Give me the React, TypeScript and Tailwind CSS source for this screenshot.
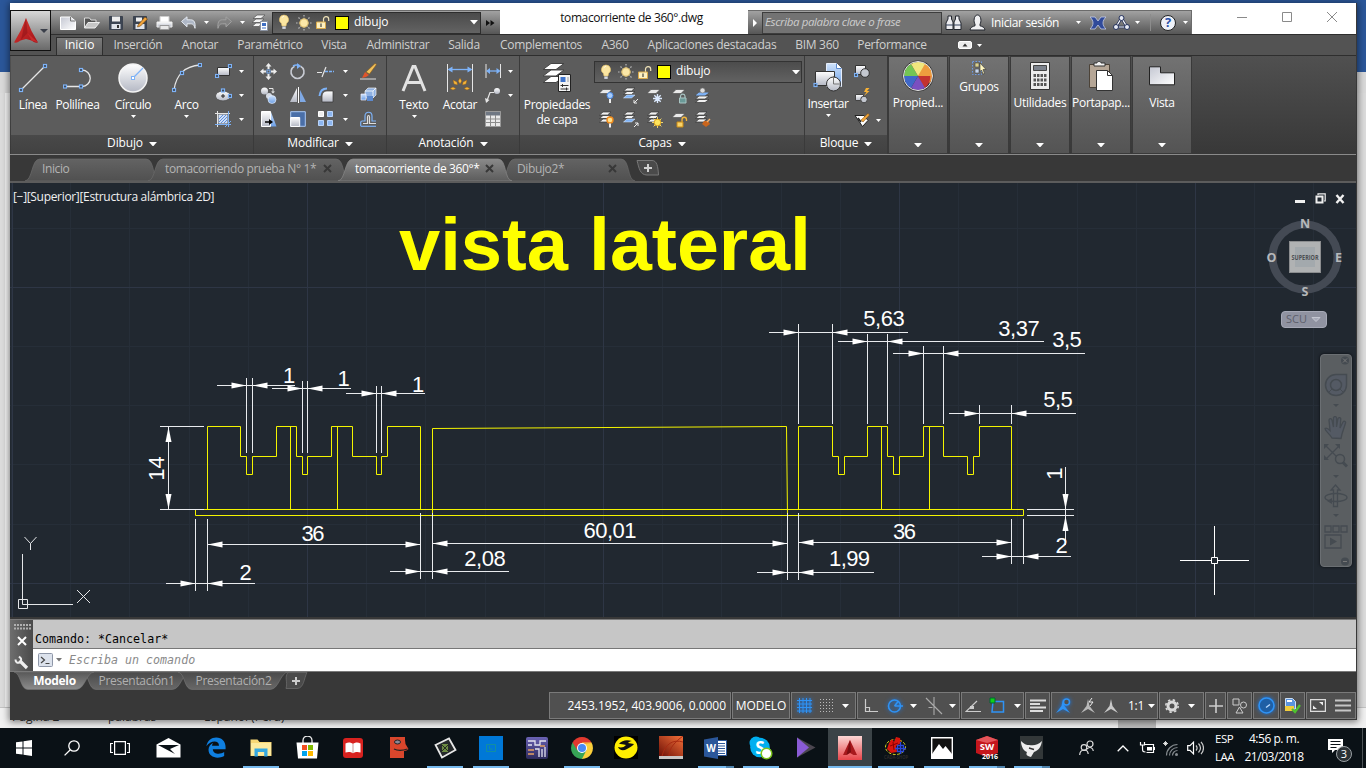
import React from "react";

type P = { children?: React.ReactNode; w?: number; h?: number; vb?: string; c?: string };

function S({ children, w = 16, h = 16, vb, c = "" }: P) {
  return (
    <svg width={w} height={h} viewBox={vb ?? `0 0 ${w} ${h}`} fill="none" className={"shrink-0 " + c}>
      {children}
    </svg>
  );
}

const B = "#7db2f7";
const W = "#e6e6e6";

function Dn({ w = 6, c = "" }: { w?: number; c?: string }) {
  return (
    <S w={w} h={w / 2 + 0.5} vb="0 0 8 4.6" c={c}>
      <path d="M0 0h8L4 4.6z" fill="#fff" />
    </S>
  );
}

function Node({ x, y }: { x: number; y: number }) {
  return <rect x={x - 1.5} y={y - 1.5} width="3" height="3" fill="#37404d" stroke={B} strokeWidth="1.2" />;
}

function Defs() {
  return (
    <svg width="0" height="0" className="absolute">
      <defs>
        <linearGradient id="lt" x1="0" y1="0" x2="0" y2="1"><stop stopColor="#fff" /><stop offset="1" stopColor="#b4b8c4" /></linearGradient>
        <linearGradient id="pg" x1="0" y1="0" x2="1" y2="1"><stop stopColor="#c4c7d2" /><stop offset="1" stopColor="#fff" /></linearGradient>
        <linearGradient id="bl" x1="0" y1="0" x2="0" y2="1"><stop stopColor="#cfe2fb" /><stop offset="1" stopColor="#6c9fe6" /></linearGradient>
        <linearGradient id="tab" x1="0" y1="0" x2="0" y2="1"><stop stopColor="#636363" /><stop offset="1" stopColor="#505050" /></linearGradient>
        <linearGradient id="tabOn" x1="0" y1="0" x2="0" y2="1"><stop stopColor="#8a8a8a" /><stop offset="1" stopColor="#5c5c5c" /></linearGradient>
        <linearGradient id="lay" x1="0" y1="0" x2="0" y2="1"><stop stopColor="#4a4a4a" /><stop offset="1" stopColor="#686868" /></linearGradient>
        <linearGradient id="layOn" x1="0" y1="0" x2="0" y2="1"><stop stopColor="#585858" /><stop offset="1" stopColor="#8c8c8c" /></linearGradient>
        <linearGradient id="red" x1="0" y1="0" x2="1" y2="1"><stop stopColor="#e23a33" /><stop offset="1" stopColor="#a01218" /></linearGradient>
        <linearGradient id="org" x1="0" y1="1" x2="1" y2="0"><stop stopColor="#6d1006" /><stop offset="1" stopColor="#f4713a" /></linearGradient>
        <linearGradient id="pur" x1="0" y1="0" x2="0" y2="1"><stop stopColor="#6a62b4" /><stop offset="1" stopColor="#2c2a5c" /></linearGradient>
        <linearGradient id="acd" x1="0" y1="0" x2="0" y2="1"><stop stopColor="#fbd7d5" /><stop offset="1" stopColor="#e8454a" /></linearGradient>
      </defs>
    </svg>
  );
}

/* ---------- layer state glyphs ---------- */
const Bulb = () => (
  <S w={12} h={17}>
    <path d="M6 1a4.6 4.6 0 0 0-2.6 8.4L4 12h4l.6-2.6A4.6 4.6 0 0 0 6 1z" fill="#fbe6a2" stroke="#e2bf67" strokeWidth=".6" />
    <path d="M4.3 3.5c.4-1 1-1.300 1.800-1.200" stroke="#fff" />
    <path d="M4.300 12.500h3.400v2.400H4.300z" fill="#d5d9e2" />
  </S>
);
const Sun = () => (
  <S w={16} h={16}>
    <path d="M8 0v16M0 8h16M2.500 2.500l11 11M13.500 2.500l-11 11" stroke="#b9b9b9" strokeWidth="1.200" strokeDasharray="1.600 1.200" />
    <circle cx="8" cy="8" r="4.200" fill="#fbe7a8" stroke="#d8b763" />
  </S>
);
const Lock = () => (
  <S w={15} h={15}>
    <path d="M8.500 7V4.200a2.600 2.600 0 0 1 5.200 0V6" stroke="#f0e3b8" strokeWidth="1.200" />
    <path d="M1.500 7h9v6.500h-9z" fill="#fdf0c0" stroke="#d9a94a" />
    <path d="M6 8.500v3.500" stroke="#222" />
  </S>
);
const LayerState = () => (
  <>
    <span className="flex w-[22px] justify-center"><Bulb /></span>
    <span className="flex w-[17px] justify-center"><Sun /></span>
    <span className="flex w-[20px] justify-center"><Lock /></span>
    <span className="mr-[5px] ml-[3px] h-[14px] w-[14px] border border-black bg-[#ffff00]" />
    <span className="pb-[2px] text-[12px] tracking-[-0.150px] text-white">dibujo</span>
  </>
);

/* ---------- title bar ---------- */
const quick: [string, React.ReactNode][] = [
  ["w-[24px]", <S w={18} h={16}><path d="M1.500 2h10l5 4v8.500h-15z" fill="url(#pg)" stroke="#fff" /><path d="M11.500 2v4h5" stroke="#777" /></S>],
  ["w-[24px]", <S w={18} h={16}><path d="M1.500 13V3h5l1.500 2h5v3" fill="#555" stroke="#ddd" /><path d="M1.500 13 5 7.500h11.500L12 13z" fill="#c6c6c6" stroke="#eee" /></S>],
  ["w-[24px]", <S><path d="M1.500 1.500h13v13h-13z" fill="#3c4553" stroke="#3b424e" /><path d="M4 1.500h8v5H4z" fill="#eee" /><path d="M3.500 9h9v5h-9z" fill="#dfe3ea" /><path d="M9 10h2v3H9z" fill="#333" /></S>],
  ["w-[24px]", <S><path d="M1.500 1.500h13v13h-13z" fill="#3c4553" stroke="#3b424e" /><path d="M4 2.500h6v4H4z" fill="#eee" /><path d="M3.500 9h9v5h-9z" fill="#dfe3ea" /><path d="m6 10 7-8 2.500 2L8.500 11 5.500 12z" fill="#f1a33b" stroke="#71440f" strokeWidth=".6" /></S>],
  ["w-[24px]", <S w={17}><path d="M4 7V1.500h9V7" fill="#fff" stroke="#ccc" /><path d="M1 7h15v5H1z" fill="url(#lt)" stroke="#eee" /><path d="M4 10.500h9v4H4z" fill="#e8e8e8" stroke="#999" /></S>],
  ["w-[24px]", <S w={17}><path d="M1.500 6.500 7 1.800v3h3.500c4 0 5 3 4.500 8.500-1-3.500-2-4.500-4.500-4.500H7v3z" fill="#aeb7c6" stroke="#e4e9f0" /></S>],
  ["w-[12px]", <Dn w={5} />],
  ["w-[24px]", <S w={17}><path d="M15.500 6.500 10 1.800v3H6.500c-4 0-5 3-4.500 8.500 1-3.500 2-4.500 4.500-4.500H10v3z" fill="#828282" stroke="#a2a2a2" /></S>],
  ["w-[12px]", <Dn w={5} />],
];

const Sheets = () => (
  <S w={18} h={17}>
    <path d="M6 1h8l-4 3.500H2zM5 5h8l-4 3.500H1zM5 9h6l-3 3.500H1z" fill="#f2f2f2" stroke="#555" strokeWidth=".7" />
    <path d="M9.500 7.500h7v9h-7z" fill="#fff" stroke="#8a93a2" /><path d="M11 9h4v3h-4z" fill="#3f6fc4" /><path d="M11 14h4" stroke="#3f6fc4" />
  </S>
);

function TitleBar() {
  return (
    <div className="flex h-[31px] items-end bg-white pr-[1px]">
      <div className="flex h-[24px] w-[449px] shrink-0 items-center border-t border-[#6b6b6b] bg-gradient-to-b from-[#a2a2a2] to-[#565656] pl-[5px]">
        {quick.map(([w, n], i) => (
          <span key={i} className={"flex shrink-0 items-center justify-center " + w}>{n}</span>
        ))}
        <span className="flex w-[24px] justify-center"><Sheets /></span>
        <div className="flex h-[22px] w-[209px] items-center border border-[#2d2d2d] bg-gradient-to-b from-[#4b4b4b] to-[#636363]">
          <LayerState />
          <Dn w={8} c="mr-[2px] ml-auto" />
        </div>
        <S w={9} h={8} c="ml-[5px]"><path d="M0 1v6l4-3zM4.500 1v6l4-3z" fill="#111" /></S>
      </div>
      <div className="flex h-[31px] w-[248px] shrink-0 items-center justify-center pb-[2px] pl-[15px] text-[12px] tracking-[-0.400px] text-[#111]">tomacorriente de 360°.dwg</div>
      <div className="flex h-[24px] w-[444px] shrink-0 items-center border-t border-r border-[#6b6b6b] bg-gradient-to-b from-[#a2a2a2] to-[#565656]">
        <S w={14} h={8}><path d="M5 0v8l4-4z" fill="#fff" /></S>
        <div className="flex h-[22px] w-[180px] items-center border border-[#3d3d3d] bg-[#737373] pb-[2px] pl-[2px] text-[11.500px] tracking-[-0.380px] whitespace-nowrap text-[#cdcdcd] italic">Escriba palabra clave o frase</div>
        <S w={17} h={17} c="ml-[3px]">
          <path d="M3 2h3.500v3L8 8v7.500H1V9l2-4zM10.500 2H14v3l2 4v6.500H9V8l1.500-3z" fill="#ececf0" stroke="#23272f" /><path d="M1 11h7M9 11h7" stroke="#33405a" />
        </S>
        <S w={17} h={17} c="ml-[7px]">
          <path d="M1 16c.3-3 3-3.500 5-4.200V10C4.500 8.500 4.500 1 8.500 1s4 7.500 2.500 9v1.800c2 .7 4.700 1.200 5 4.200z" fill="#f0f0f2" stroke="#23272f" />
        </S>
        <span className="ml-[5px] w-[85px] text-[12px] tracking-[-0.350px] whitespace-nowrap text-white">Iniciar sesión</span>
        <Dn w={5} />
        <S w={16} h={14} c="ml-[9px]">
          <path d="M0 1h5l3 4 3-4h5c-4 4-4 8 0 12h-5L8 9l-3 4H0c4-4 4-8 0-12z" fill="#304a9a" stroke="#c6cde4" strokeWidth=".8" />
        </S>
        <S w={17} h={16} c="ml-[7px]">
          <path d="M8.500 3 3 12h11z" stroke="#23305c" strokeWidth="2.600" /><path d="M8.500 3 3 12h11z" stroke="#fff" strokeWidth="1.200" />
          <circle cx="8.500" cy="3" r="2.500" fill="#e8ebf5" stroke="#23305c" /><circle cx="3" cy="12" r="2.500" fill="#e8ebf5" stroke="#23305c" /><circle cx="14" cy="12" r="2.500" fill="#e8ebf5" stroke="#23305c" />
        </S>
        <Dn w={5} c="ml-[5px]" />
        <span className="ml-[10px] h-[17px] w-px bg-[#8c8c8c]" />
        <span className="ml-[9px] flex h-[16px] w-[16px] items-center justify-center rounded-full border border-[#222] bg-[#eef1f8] text-[13px] font-bold text-[#2a50a8]">?</span>
        <Dn w={5} c="ml-[7px]" />
      </div>
      <div className="flex h-[31px] flex-1 justify-end pb-[4px]">
        <span className="flex w-[45px] items-center justify-center"><S w={10} h={10}><path d="M0 5.500h10" stroke="#8a8a8a" /></S></span>
        <span className="flex w-[45px] items-center justify-center"><S w={10} h={10}><path d="M.5.500h9v9h-9z" stroke="#8a8a8a" /></S></span>
        <span className="flex w-[46px] items-center justify-center"><S w={10} h={10}><path d="m0 0 10 10M10 0 0 10" stroke="#8a8a8a" /></S></span>
      </div>
    </div>
  );
}

const ribbonTabs: [string, string][] = [
  ["Inserción", "w-[70px]"], ["Anotar", "w-[54px]"], ["Paramétrico", "w-[86px]"], ["Vista", "w-[42px]"],
  ["Administrar", "w-[86px]"], ["Salida", "w-[46px]"], ["Complementos", "w-[108px]"], ["A360", "w-[40px]"],
  ["Aplicaciones destacadas", "w-[154px]"], ["BIM 360", "w-[56px]"], ["Performance", "w-[94px]"],
];

function RibbonTabs() {
  return (
    <div className="flex h-[21px] border-t border-[#2e2e2e] bg-[#535353] pt-[2px] pl-[5px]">
      <span className="flex h-[18px] w-[47px] shrink-0 items-center justify-center border border-b-0 border-[#2e2e2e] bg-gradient-to-b from-[#7b7b7b] to-[#606060] pb-[3px] text-[12px] text-white">Inicio</span>
      {ribbonTabs.map(([t, w]) => (
        <span key={t} className={"flex h-[15px] shrink-0 items-center justify-center text-[12px] tracking-[-0.280px] whitespace-nowrap text-[#d0d0d0] " + w}>{t}</span>
      ))}
      <S w={14} h={8} c="mt-[4px] ml-[19px]"><rect x=".5" y=".5" width="13" height="7" rx="1.500" fill="#ececec" stroke="#fff" /><path d="M4.500 5.500h5L7 2.500z" fill="#333" /></S>
      <Dn w={5} c="mt-[7px] ml-[5px]" />
    </div>
  );
}

/* ---------- ribbon ---------- */
function Panel({ title, w, children }: { title: string; w: string; children: React.ReactNode }) {
  return (
    <div className={"flex shrink-0 flex-col border-r border-[#3a3a3a] " + w}>
      <div className="flex h-[79px] bg-[#5c5c5c]">{children}</div>
      <div className="flex h-[19px] items-center justify-center gap-[6px] bg-gradient-to-b from-[#494949] to-[#414141] pb-[3px] text-[12px] tracking-[-0.150px] text-white">{title}<Dn w={8} c="mt-[2px]" /></div>
    </div>
  );
}
function Big({ w, icon, label, arrow, top = "pt-[6px]" }: { w: string; icon: React.ReactNode; label: string[]; arrow?: boolean; top?: string }) {
  return (
    <div className={`flex shrink-0 flex-col items-center ${w} ${top}`}>
      <div className="flex h-[32px] items-center">{icon}</div>
      <div className="mt-[3px] flex flex-col items-center">
        {label.map((l) => <span key={l} className="h-[15px] text-[12px] leading-[15px] tracking-[-0.350px] whitespace-nowrap text-white">{l}</span>)}
      </div>
      {arrow && <Dn w={5} c="mt-[3px]" />}
    </div>
  );
}
function Row({ items }: { items: [string, React.ReactNode][] }) {
  return (
    <div className="flex h-[24px] items-center">
      {items.map(([w, n], i) => <span key={i} className={"flex shrink-0 items-center justify-center " + w}>{n}</span>)}
    </div>
  );
}

const stack = "M5 1h8l-3.500 3H1.500zM5 4.500h8l-3.500 3H1.500zM5 8h8l-3.500 3H1.500z";
function Layer({ blue, one, children }: { blue?: boolean; one?: boolean; children?: React.ReactNode }) {
  return (
    <S w={17} h={17}>
      {one ? <path d="M5 2.500h9l-4 4H1z" fill="#e9e9e9" stroke="#444" strokeWidth=".6" /> : <path d={stack} fill="#f1f1f1" stroke="#333" strokeWidth=".7" />}
      {blue && <path d="M5 8h8l-3.500 3H1.500z" fill={B} stroke="#dce9fb" strokeWidth=".6" />}
      {children}
    </S>
  );
}

function Ribbon() {
  const a: [string, React.ReactNode] = ["w-[12px]", <Dn w={5} />];
  return (
    <div className="flex h-[99px] border-t border-[#2e2e2e] bg-gradient-to-b from-[#505050] to-[#383838] pl-[1px]">
      <Panel title="Dibujo" w="w-[243px]">
        <Big w="w-[44px]" label={["Línea"]} icon={<S w={30} h={30}><path d="M3 27 27 3" stroke={W} strokeWidth="1.300" /><Node x={3} y={27} /><Node x={27} y={3} /></S>} />
        <Big w="w-[45px]" label={["Polilínea"]} icon={<S w={30} h={30}><path d="M2 23.500h17a8 8 0 0 0 0-16.500" stroke={W} strokeWidth="1.300" /><Node x={2} y={23.500} /><Node x={18} y={23.500} /><Node x={18} y={7} /></S>} />
        <Big w="w-[66px]" arrow label={["Círculo"]} icon={<S w={30} h={30}><circle cx="15" cy="15" r="14" fill="url(#lt)" stroke="#f4f4f4" strokeWidth="1.500" /><path d="m15 15 10-10" stroke={B} strokeWidth="1.300" /><rect x="13.500" y="13.500" width="3" height="3" fill="#fff" stroke={B} /></S>} />
        <Big w="w-[41px]" arrow label={["Arco"]} icon={<S w={30} h={30}><path d="M2 27C4 11 14 3 28 2" stroke={W} strokeWidth="1.300" /><Node x={2} y={27} /><Node x={10} y={10} /><Node x={28} y={2} /></S>} />
        <div className="flex flex-col pt-[3px] pl-[4px]">
          <Row items={[["w-[24px]", <S w={17} h={14}><path d="M2.500 3.500h12v8h-12z" fill="url(#lt)" stroke="#333" /><Node x={2} y={12} /><Node x={15} y={2} /></S>], a]} />
          <Row items={[["w-[24px]", <S w={17} h={14}><ellipse cx="8" cy="8" rx="7.500" ry="5" fill="url(#lt)" stroke="#555" /><path d="M6 8h4M8 6v4" stroke="#222" /><Node x={8} y={2.500} /><Node x={15} y={8} /></S>], a]} />
          <Row items={[["w-[24px]", <S><path d="M3.500 3.500h9v9h-9z" fill="#cfdff7" /><path d="m4 8 4-4M4 11l7-7M6 12l6-6M9 12l3-3" stroke="#5d8edb" /><path d="M0 2.500h15M2.500 0v16" stroke={W} /><path d="M0 13.500h16M13.500 0v16M10 16l6-6" stroke={B} /></S>], a]} />
        </div>
      </Panel>
      <Panel title="Modificar" w="w-[133px]">
        <div className="flex flex-col pt-[3px]">
          <Row items={[
            ["w-[29px]", <S w={17} h={17}><path d="M8.500 0l3 3.500h-2V6h-2V3.500h-2zM8.500 17l3-3.500h-2V11h-2v2.500h-2zM0 8.500l3.500-3v2H6v2H3.500v2zM17 8.500l-3.500-3v2H11v2h2.500v2z" fill="#eee" /><rect x="7" y="7" width="3" height="3" stroke={B} /></S>],
            ["w-[29px]", <S w={17} h={17}><path d="M5.500 3.200a6.500 6.500 0 1 0 6 0" stroke="#c9ccd4" strokeWidth="1.600" /><path d="M4 3a8 8 0 0 1 6-.5" stroke={B} strokeWidth="1.500" /><path d="m8 0 4 3-4 3z" fill={B} /></S>],
            ["w-[27px]", <S w={17} h={17}><path d="M0 9.500h5M5 14 9 4" stroke={W} strokeWidth="1.200" /><path d="M8 8.500h9" stroke={B} strokeWidth="1.400" strokeDasharray="3 1" /></S>], a,
            ["w-[34px]", <S w={17} h={17}><path d="m6 9 9-8.500 1.500 1L9.500 11z" fill="#f2c15b" stroke="#8a5a14" strokeWidth=".6" /><path d="m5 9 4 3-3 2-4 1z" fill="#e0552b" /><path d="M0 16h16" stroke="#ddd" /></S>],
          ]} />
          <Row items={[
            ["w-[29px]", <S w={17} h={17}><circle cx="4.500" cy="4" r="3.500" fill="url(#lt)" /><circle cx="9" cy="9" r="3" fill="#d5dae4" /><circle cx="12" cy="12.500" r="4" fill="url(#bl)" stroke="#e3edfb" strokeWidth=".7" /><path d="M9 1.500h4V5" stroke={W} /><path d="m11 4.500 2 2 2-2z" fill={W} /></S>],
            ["w-[29px]", <S><path d="M7 1v14H0z" fill="url(#lt)" /><path d="M10 3v12h6z" fill="#7fa9e5" /><path d="M8.500 0v16" stroke="#fff" /></S>],
            ["w-[27px]", <S><path d="M4 15V9c0-3 2-5 5-5h6v11z" fill="url(#lt)" stroke="#333" strokeWidth=".7" /><path d="M1.500 9C2 4 4 1.500 9 1.500" stroke={B} strokeWidth="2" /></S>], a,
            ["w-[34px]", <S w={17}><path d="m5 4 3-3h8v7l-3 3H5z" fill="#8fb1e2" stroke="#eee" strokeWidth=".7" /><path d="M5 4h8v7M13 4l3-3" stroke="#fff" strokeWidth=".8" /><path d="M1 7h5v6H1z" fill="url(#bl)" stroke="#eef" strokeWidth=".7" /><path d="M7 9h6v5H7z" fill="#5c88cc" /></S>],
          ]} />
          <Row items={[
            ["w-[29px]", <S><path d="M.5.500h9v15h-9z" fill="url(#lt)" stroke="#fff" /><path d="m10 1 5.500 14.500H10z" fill="url(#bl)" /><path d="M4 11h5" stroke="#000" strokeWidth="1.500" /><path d="m8 8 4 3-4 3z" fill="#000" /></S>],
            ["w-[29px]", <S><path d="M.7.700h14.600v14.600H.7z" fill="#4a6fa8" stroke="#a9c9f5" /><path d="M.7 6.500h9v9h-9z" fill="url(#lt)" stroke="#fff" /></S>],
            ["w-[27px]", <S><path d="M.5.500h5v5h-5z" fill="#eee" stroke="#fff" /><path d="M9.500.500h5v5h-5zM.5 9.500h5v5h-5zM9.500 9.500h5v5h-5z" fill="#8cb5ef" stroke="#b9d4fa" /></S>], a,
            ["w-[34px]", <S w={17}><path d="M.7 15V11.500c0-1 .5-1.500 1.500-1.500H5V5c0-5 7-5 7 0v5h4" stroke={B} strokeWidth="1.200" /><path d="M16 15.300H.7" stroke={B} strokeWidth="1.200" /><path d="M3 12.500h4.500V6c0-2 2-2 2 0v6.500H16" stroke="#ddd" strokeWidth="1.200" /></S>],
          ]} />
        </div>
      </Panel>
      <Panel title="Anotación" w="w-[133px]">
        <Big w="w-[54px]" arrow label={["Texto"]} icon={<S w={26} h={28}><path d="M2 27 12 2.500h2L24 27M6 18.500h14" stroke="#e2e2e2" strokeWidth="3" /></S>} />
        <Big w="w-[38px]" label={["Acotar"]} icon={
          <S w={28} h={28}><path d="M1.500 0v28M26.500 0v28" stroke={W} /><path d="M3 5.500h22" stroke={B} strokeWidth="1.300" /><path d="m1.500 5.500 5-3v6zM26.500 5.500l-5-3v6z" fill={B} />
            <path d="m14 14 1.800 3-1.800 3-1.800-3zM7 16l4 2 .5 3-3.500-1zM21 16l-4 2-.5 3 3.500-1zM4 24.500l3-1.500 3 1.500-3 1.500zM24 24.500l-3-1.500-3 1.500 3 1.500z" fill="#f4b53a" stroke="#8d5410" strokeWidth=".4" /></S>} />
        <div className="flex flex-col pt-[3px]">
          <Row items={[["w-[28px]", <S><path d="M1 1v14M15.500 1v14" stroke={W} /><path d="M3 8h11" stroke={B} strokeWidth="1.300" /><path d="m1 8 4-3v6zM15.500 8l-4-3v6z" fill={B} /></S>], ["w-[6px]", <Dn w={5} />]]} />
          <Row items={[["w-[28px]", <S><path d="M1.500 15 5 5.500h4" stroke={W} strokeWidth="1.200" /><circle cx="12" cy="4" r="3" fill="url(#lt)" /><path d="m0 11 1 5 3.500-3z" fill={W} /></S>], ["w-[6px]", <Dn w={5} />]]} />
          <Row items={[["w-[28px]", <S><path d="M.5.500h15v15H.5z" fill="#e9e9e9" stroke="#999" /><path d="M1 1h14v3.500H1z" fill="#6f7783" /><path d="M1 8h14M1 11.500h14M5.500 4v11M10.500 4v11" stroke="#8b8b8b" /></S>]]} />
        </div>
      </Panel>
      <Panel title="Capas" w="w-[285px]">
        <Big w="w-[74px]" label={["Propiedades", "de capa"]} icon={
          <S w={30} h={32}><path d="M9 1.500h13l-8 6H1zM9 8h13l-8 6H1zM9 14.500h13l-8 6H1z" fill="#fff" stroke="#444" /><path d="M16.500 12.500h12v17h-12z" fill="#f4f4f4" stroke="#222" /><path d="M18.500 15h5v5h-5z" fill="#3f74cc" /><path d="M25 15h2v5h-2z" fill="#c9c9c9" /><path d="M18.500 23.500h8M18.500 27h8M20.500 22v3M24.500 25.500v3" stroke="#333" /></S>} />
        <div className="flex flex-col pt-[5px]">
          <div className="flex h-[22px] w-[208px] items-center border border-[#333] bg-gradient-to-b from-[#4c4c4c] to-[#626262]">
            <LayerState /><Dn w={8} c="mr-[1px] ml-auto" />
          </div>
          <Row items={[
            ["w-[24px]", <Layer one><circle cx="12" cy="8.500" r="3" fill="#a8cdfc" stroke="#4c8be6" /><path d="M12 12v4" stroke="#eee" strokeWidth="2" /></Layer>],
            ["w-[24px]", <Layer blue><path d="m16 12-4 4m0-3v3h3" stroke="#eee" /></Layer>],
            ["w-[25px]", <Layer one><path d="M11.500 7v9M7 11.500h9M8.300 8.300l6.400 6.400M14.700 8.300l-6.400 6.400" stroke="#dceaff" strokeWidth="1.400" /></Layer>],
            ["w-[25px]", <Layer one><path d="M9.500 11V9a2.300 2.300 0 0 1 4.500 0v2" stroke="#a9c5c4" strokeWidth="1.200" /><path d="M8.500 11h6.500v5H8.500z" fill="#6b9a98" stroke="#a9c5c4" /></Layer>],
            ["w-[21px]", <S w={17} h={17}><path d="M5 5.500h10l-4 3H1.500zM5 9h10l-4 3H1.500zM5 12.500h10l-4 3H1.500z" fill="#f1f1f1" stroke="#333" strokeWidth=".7" /><path d="M5 5.500h10l-4 3H1.500z" fill={B} /><circle cx="8.500" cy="3.500" r="2.500" fill="#ddd" stroke="#777" strokeWidth=".6" /></S>],
          ]} />
          <Row items={[
            ["w-[24px]", <Layer><circle cx="12" cy="9" r="3" fill="#ffe08a" stroke="#f08b1d" strokeWidth="1.400" /><path d="M12 12.500v4" stroke="#eee" strokeWidth="2" /></Layer>],
            ["w-[24px]", <Layer blue><path d="m12 16 4-4m-3 0h3v3" stroke="#eee" /></Layer>],
            ["w-[25px]", <Layer><circle cx="11.500" cy="11.500" r="3.300" fill="#ffe45c" stroke="#e2a81c" /><path d="M11.500 6v2M11.500 15v2M6 11.500h2M15 11.500h2M7.600 7.600l1.400 1.400M14 14l1.400 1.400M15.400 7.600 14 9M9 14l-1.400 1.400" stroke="#f0d56c" /></Layer>],
            ["w-[25px]", <Layer one><path d="M11 11V8.500a2.200 2.200 0 0 1 4.500 0V10" stroke="#f3b63c" strokeWidth="1.300" /><path d="M6 11h6v5H6z" fill="#f8d36a" stroke="#c98912" /></Layer>],
            ["w-[21px]", <Layer><path d="m10 10 4 0 2 3-4 3-4-3z" fill="#c9651d" /><path d="m13 11 3-3" stroke="#f0b070" strokeWidth="1.500" /></Layer>],
          ]} />
        </div>
      </Panel>
      <Panel title="Bloque" w="w-[83px]">
        <Big w="w-[46px]" arrow top="pt-[5px]" label={["Insertar"]} icon={
          <S w={31} h={30}><path d="M13.500 1.500h10l5 5v18h-15z" fill="url(#bl)" stroke="#e6eefb" /><path d="M23.500 1.500v5h5" fill="#fff" stroke="#5c88cc" /><path d="M2.500 9.500h19v14h-19z" fill="url(#lt)" stroke="#333" /><circle cx="20.500" cy="22" r="7" fill="url(#lt)" stroke="#333" /><path d="M20.500 14v8h7" stroke="#777" /><Node x={2.500} y={23} /></S>} />
        <div className="flex flex-col pt-[4px]">
          <Row items={[["w-[21px]", <S><path d="M1.500 1.500h10v9h-10z" fill="url(#lt)" stroke="#333" /><circle cx="11" cy="9" r="4.300" fill="#c3c7cf" stroke="#333" /><Node x={2} y={11} /></S>]]} />
          <Row items={[["w-[21px]", <S><path d="M1.500 6.500h8v6h-8z" fill="url(#lt)" stroke="#444" /><circle cx="10" cy="11.500" r="3.300" fill="#c3c7cf" stroke="#444" /><path d="m12 0-2 4h2.500L10 8l5.500-5H13l2.500-3z" fill="#f9b233" /></S>]]} />
          <Row items={[["w-[21px]", <S><path d="M1 3.500h9l4 5-5.500 6z" fill="#fff" stroke="#222" /><path d="M7 8l7-6.500 1.500 1.500L9 10z" fill="#f2a73b" stroke="#79450a" strokeWidth=".5" /><path d="m4 6 3 4" stroke="#222" strokeWidth="1.500" /></S>], ["w-[12px]", <Dn w={5} />]]} />
        </div>
      </Panel>
      {([
        ["Propied...", <S w={32} h={32}><circle cx="16" cy="16" r="15.500" fill="#333" />
          <path d="M16 16V2A14 14 0 0 1 28.100 9z" fill="#f4d76b" /><path d="M16 16 28.100 9a14 14 0 0 1 0 14z" fill="#e98a37" /><path d="M16 16 28.100 16A14 14 0 0 1 22 28.500z" fill="#c3322f" /><path d="M16 16l7 12A14 14 0 0 1 9 28z" fill="#7a4fc0" /><path d="M16 16 9 28a14 14 0 0 1-7-12z" fill="#4068c8" /><path d="M16 16H2A14 14 0 0 1 9 4z" fill="#74c554" />
          <path d="M16 16 9 4A14 14 0 0 1 23 4z" fill="#f1e77e" /><path d="M16 16 23 4a14 14 0 0 1 7 12z" fill="#ee9c3e" /><circle cx="16" cy="16" r="14.500" stroke="#e9e9e9" /></S>, ""],
        ["Grupos", <S w={17} h={16}><path d="M1.500 1.500h9v13h-9z" stroke="#6d9be6" strokeDasharray="1.500 1.500" /><path d="M4 3h4v4H4z" fill="#d9cf8e" stroke="#444" strokeWidth=".6" /><path d="M4 9h4v4H4z" fill="#c3d4ee" stroke="#444" strokeWidth=".6" /><path d="m9 3 6 6.500h-3l1.500 4-1.500.6L10.500 10 9 11.500z" fill="#fff7c0" stroke="#333" strokeWidth=".6" /></S>, "g"],
        ["Utilidades", <S w={22} h={30}><path d="M1.500 1.500h19v27h-19z" fill="#ececec" stroke="#333" /><path d="M4.500 4.500h13v5h-13z" fill="#7c828c" stroke="#444" /><path d="M4.500 14.500h13M4.500 19h13M4.500 23.500h13" stroke="#555" strokeWidth="3" strokeDasharray="2.500 1" /></S>, ""],
        ["Portapap...", <S w={28} h={31}><path d="M2.500 3.500h20v23h-20z" fill="#b5a696" stroke="#4c4338" /><path d="M7 5V2h3c0-2 4-2 4 0h4v3z" fill="#f2f2f2" stroke="#333" /><path d="M9.500 9.500h11l5 5v15h-16z" fill="#fff" stroke="#333" /><path d="M20.500 9.500v5h5" stroke="#333" /></S>, ""],
        ["Vista", <S w={28} h={20}><path d="M1.500.800h11v6h14v12h-25z" fill="url(#pg)" stroke="#222" /></S>, ""],
      ] as [string, React.ReactNode, string][]).map(([t, ic, k]) => (
        <div key={t} className="mr-[1px] flex w-[60px] shrink-0 flex-col items-center border border-[#3a3a3a] bg-gradient-to-b from-[#727272] to-[#545454]">
          <div className={"flex items-center " + (k ? "h-[22px]" : "h-[38px]")}>{ic}</div>
          <span className="text-[12px] leading-[15px] tracking-[-0.300px] whitespace-nowrap text-white">{t}</span>
          <Dn w={8} c="mt-auto mb-[6px]" />
        </div>
      ))}
    </div>
  );
}

/* ---------- file tabs ---------- */
function FileTab({ w, cw, label, on, close }: { w: string; cw: number; label: string; on?: boolean; close?: boolean }) {
  return (
    <div className={"relative flex h-[23px] shrink-0 items-center " + w + (on ? " z-10" : "")}>
      <S w={cw + 13} h={23} c="absolute top-0 left-[-6px]">
        <path d={`M0 23C8 22 6 1 15 1H${cw - 2}C${cw + 7} 1 ${cw + 4} 22 ${cw + 12} 23z`} fill={on ? "url(#tabOn)" : "url(#tab)"} stroke={on ? "#8a8a8a" : "#6c6c6c"} strokeWidth=".7" />
      </S>
      <span className={"relative pb-[2px] pl-[11px] text-[12px] tracking-[-0.380px] whitespace-nowrap " + (on ? "text-white" : "text-[#b4b4b4]")}>{label}</span>
      {close && <S w={9} h={9} c="relative mr-[12px] mb-[2px] ml-auto"><path d="m1 1 7 7M8 1 1 8" stroke="#383838" strokeWidth="2" /></S>}
    </div>
  );
}

/* ---------- drawing ---------- */
type Dir = "l" | "r" | "u" | "d";
function Tip({ x, y, d }: { x: number; y: number; d: Dir }) {
  const p = { l: `${x},${y} ${x + 15},${y - 3} ${x + 15},${y + 3}`, r: `${x},${y} ${x - 15},${y - 3} ${x - 15},${y + 3}`, u: `${x},${y} ${x - 3},${y + 15} ${x + 3},${y + 15}`, d: `${x},${y} ${x - 3},${y - 15} ${x + 3},${y - 15}` }[d];
  return <polygon points={p} fill="#fff" />;
}
/* horizontal dimension: y and a-b give the line, p and q the measured edges, then the value and its anchor */
type Dim = { y: number; a: number; b: number; p: number; q: number; inside?: boolean; t: string; tx: number; ty: number; len?: number };
const dims: Dim[] = [
  { y: 385.5, a: 217, b: 295, p: 246.5, q: 252.5, t: "1", tx: 289, ty: 382.500 },
  { y: 388.5, a: 272, b: 351, p: 302.5, q: 307.5, t: "1", tx: 343.500, ty: 385.500 },
  { y: 393.5, a: 346, b: 425, p: 376.5, q: 381.5, t: "1", tx: 418, ty: 391.500 },
  { y: 544.5, a: 207, b: 421, p: 207.5, q: 420.5, inside: true, t: "36", tx: 313, ty: 541, len: 23 },
  { y: 583.5, a: 166, b: 255, p: 195.5, q: 207.5, t: "2", tx: 245.500, ty: 580 },
  { y: 543.5, a: 432, b: 788, p: 432.5, q: 787.5, inside: true, t: "60,01", tx: 610, ty: 537.500, len: 53 },
  { y: 571.5, a: 390, b: 509, p: 420.5, q: 432.5, t: "2,08", tx: 485, ty: 565.500, len: 41.500 },
  { y: 332.5, a: 769, b: 908, p: 798.5, q: 832.5, t: "5,63", tx: 884, ty: 326, len: 41.500 },
  { y: 341.5, a: 838, b: 1044, p: 867.5, q: 887.5, t: "3,37", tx: 1019, ty: 336, len: 41.500 },
  { y: 353.5, a: 893, b: 1085, p: 923.5, q: 943.5, t: "3,5", tx: 1067, ty: 347, len: 29.500 },
  { y: 413.5, a: 949, b: 1076, p: 979.5, q: 1011.5, t: "5,5", tx: 1058, ty: 407, len: 29.500 },
  { y: 542.5, a: 798, b: 1012, p: 798.5, q: 1011.5, inside: true, t: "36", tx: 904.500, ty: 539, len: 23 },
  { y: 556.5, a: 982, b: 1071, p: 1011.5, q: 1023.5, t: "2", tx: 1061.500, ty: 553 },
  { y: 572.5, a: 757, b: 874, p: 787.5, q: 798.5, t: "1,99", tx: 849.500, ty: 566, len: 41 },
];
const ext: [number, number, number][] = [
  [246.5, 378, 453], [252.5, 378, 453], [302.5, 381, 453], [307.5, 381, 453], [376.5, 386, 453], [381.5, 386, 453],
  [195.5, 519, 591], [207.5, 519, 591], [420.5, 513, 579], [432.5, 513, 579], [787.5, 513, 580], [798.5, 513, 580],
  [798.5, 324, 424], [832.5, 324, 424], [867.5, 334, 424], [887.5, 334, 424], [923.5, 346, 424], [943.5, 346, 424],
  [979.5, 405, 424], [1011.5, 405, 424], [1011.5, 519, 564], [1023.5, 519, 564],
];
const minorX = Array.from({ length: 23 }, (_, i) => Math.round(11 + i * 59.2) + 0.5);
const minorY = [228.5, 346.5, 405.5, 464.5, 524.5];

function Drawing() {
  return (
    <svg width="1346" height="434" viewBox="10 183 1346 434" className="block" fontFamily='"Liberation Sans", Arial, sans-serif'>
      <rect x="10" y="183" width="1346" height="434" fill="#212830" />
      <g stroke="#262e38" shapeRendering="crispEdges">
        {minorX.map((x) => <path key={x} d={`M${x} 183V617`} />)}
        {minorY.map((y) => <path key={y} d={`M10 ${y}H1356`} />)}
      </g>
      <g stroke="#2e3645" shapeRendering="crispEdges">
        {[12.5, 307.5, 603.5, 899.5, 1195.5].map((x) => <path key={x} d={`M${x} 183V617`} />)}
        {[287.5, 583.5].map((y) => <path key={y} d={`M10 ${y}H1356`} />)}
      </g>
      <g fontSize="73.500" fontWeight="700" fill="#ffff00">
        <text x="399" y="270" textLength="169" lengthAdjust="spacingAndGlyphs">vista</text>
        <text x="589" y="270" textLength="222" lengthAdjust="spacingAndGlyphs">lateral</text>
      </g>
      <g stroke="#f4f400" fill="none">
        <path d="M207.500 509.500V426.500H240.500V456.500H246.500V474.500H252.500V456.500H276.500V426.500H296.500V456.500H302.500V474.500H307.500V456.500H331.500V426.500H352.500V456.500H376.500V474.500H381.500V456.500H387.500V426.500H420.500V509.500M290.500 426.500V509.500M337.500 426.500V509.500" />
        <path d="M432.500 515.500V428.500L786.500 426.500L787.500 515.500" />
        <path d="M798.500 509.500V426.500H832.500V456.500H838.500V474.500H844.500V456.500H867.500V426.500H887.500V456.500H893.500V474.500H899.500V456.500H923.500V426.500H943.500V456.500H967.500V474.500H973.500V456.500H979.500V426.500H1011.500V509.500M881.500 426.500V509.500M929.500 426.500V509.500" />
        <path d="M195.500 509.500H1023.500V515.500H195.500z" />
      </g>
      <g stroke="#e9ebee">
        {ext.map(([x, a, b], i) => <path key={i} d={`M${x} ${a}V${b}`} />)}
        {dims.map((d, i) => <path key={i} d={`M${d.a} ${d.y}H${d.b}`} />)}
        <path d="M160 426.500H204M160 509.500H204M168.500 427V509M1027 509.500H1074M1027 515.500H1074M1065.500 467V545" />
      </g>
      {dims.map((d, i) => (
        <g key={i}>
          <Tip x={d.p} y={d.y} d={d.inside ? "l" : "r"} />
          <Tip x={d.q} y={d.y} d={d.inside ? "r" : "l"} />
        </g>
      ))}
      <Tip x={168.500} y={427} d="u" /><Tip x={168.500} y={509} d="d" /><Tip x={1065.500} y={509} d="d" /><Tip x={1065.500} y={516} d="u" />
      <g fill="#fff" fontSize="22" textAnchor="middle">
        {dims.map((d, i) => <text key={i} x={d.tx} y={d.ty} textLength={d.len}>{d.t}</text>)}
        <text transform="translate(164 468.500) rotate(-90)">14</text>
        <text transform="translate(1062 473.500) rotate(-90)">1</text>
      </g>
      <g stroke="#e4e6e8" fill="none">
        <path d="M22.500 554V604.500H73M18.500 599.500h9v9h-9zM24.500 537l6 6.500M36.500 537l-6 6.500v6.500M77 590l13 13M90 590l-13 13" />
      </g>
      <path d="M1214.500 526V557M1214.500 564V595M1180 560.500H1211M1218 560.500H1249M1211.500 557.500h6v6h-6z" stroke="#fff" fill="none" />
    </svg>
  );
}

function ViewCube() {
  return (
    <svg width="78" height="84" viewBox="1266 215 78 84" className="absolute top-[32px] left-[1256px]" fontFamily='"Open Sans", sans-serif' fontWeight="700" fontSize="12.500" textAnchor="middle" fill="#b6b8ba">
      <circle cx="1305" cy="257" r="32.500" fill="none" stroke="#444a54" strokeWidth="8" />
      <rect x="1289.500" y="241.500" width="31" height="31" fill="#b0b2b3" stroke="#8b8d8f" />
      <rect x="1295" y="247" width="20" height="20" fill="#a3a9ad" />
      <text x="1305" y="260" fontSize="7.200" textLength="27" lengthAdjust="spacingAndGlyphs" fill="#4c4f53">SUPERIOR</text>
      <text x="1305" y="228">N</text><text x="1305" y="296">S</text><text x="1271.500" y="262">O</text><text x="1338.500" y="262">E</text>
    </svg>
  );
}

function NavBar() {
  const k = "#454b51";
  return (
    <div className="absolute top-[171px] left-[1310px] flex h-[213px] w-[32px] flex-col items-center rounded-[4px] border border-[#6b6f73] bg-[#5a5e61] shadow-[0_0_2px_1px_#151a20]">
      <S w={26} h={9} c="mt-[1px]"><circle cx="22" cy="4.500" r="4" fill={k} /><path d="m20 2.500 4 4M24 2.500l-4 4" stroke="#777" /></S>
      <S w={24} h={24} c="mt-[8px]"><path d="M12 1.500h10.500V12A10.500 10.500 0 1 1 12 1.500z" fill="#545a64" stroke={k} strokeWidth="1.500" /><circle cx="12" cy="12" r="5.500" stroke={k} strokeWidth="1.500" /><path d="m5 19 3-3M19 19l-3-3" stroke={k} /></S>
      <S w={6} h={3} c="mt-[7px]"><path d="M0 0h6L3 3z" fill={k} /></S>
      <span className="mt-[5px] h-px w-[26px] bg-[#65696c]" />
      <S w={24} h={24} c="mt-[4px]"><path d="M8 22C5 17 1 15 1 12.500c1.500-1 3 0 5 2L5 4c.5-2 2.500-1.500 3 0l1.500 7V1.500c1-1.500 2.500-1 3 0V11L14 2.500c1-1.500 2.500-1 2.800.3L16 12l3-6c1-1.500 3-.5 2.500 1L18 18l-1 4.500z" fill="#545a64" stroke={k} strokeWidth="1.300" /></S>
      <S w={24} h={24} c="mt-[4px]"><path d="m2 2 13 13M15 2 2 15" stroke={k} strokeWidth="1.300" /><path d="M0 0h5L0 5zM16 0h-5l5 5zM0 16h5l-5-5z" fill={k} /><circle cx="16" cy="15" r="4.500" fill="#5a5e61" stroke={k} strokeWidth="1.500" /><path d="m19 18.500 4 4" stroke={k} strokeWidth="3" /></S>
      <S w={6} h={3} c="mt-[7px]"><path d="M0 0h6L3 3z" fill={k} /></S>
      <S w={24} h={24} c="mt-[6px]"><path d="M9.500 22.500V6H7l4.500-5L16 6h-2.500v16.500z" stroke={k} strokeWidth="1.300" /><ellipse cx="12" cy="13.500" rx="11" ry="4" stroke={k} strokeWidth="1.300" /><path d="m3 17 5-3v6z" fill={k} /></S>
      <S w={6} h={3} c="mt-[6px]"><path d="M0 0h6L3 3z" fill={k} /></S>
      <span className="mt-[4px] h-px w-[26px] bg-[#65696c]" />
      <S w={24} h={24} c="mt-[4px]"><path d="M1 1h6v6H1zM9 1h6v6H9zM17 1h6v6h-6zM1 10h16v13H1z" stroke={k} strokeWidth="1.300" /><path d="m6 12.500 7 4-7 4z" fill={k} /></S>
      <S w={26} h={9} c="mt-[8px]"><circle cx="22" cy="4.500" r="4" fill={k} /><path d="M20 4.500h4" stroke="#777" /></S>
    </div>
  );
}

function Canvas() {
  return (
    <div className="relative h-[434px] shrink-0 overflow-hidden">
      <Drawing />
      <span className="absolute top-[6px] left-[3px] text-[12px] leading-[16px] tracking-[-0.320px] whitespace-nowrap text-[#f0f0f0]">[−][Superior][Estructura alámbrica 2D]</span>
      <div className="absolute top-[10px] left-[1285px] flex items-center">
        <S w={10} h={10}><path d="M0 7.500h10" stroke="#f0f0f0" strokeWidth="3" /></S>
        <S w={11} h={11} c="ml-[10px]"><path d="M3 2V.8h7.200V8H9" stroke="#eee" strokeWidth="1.200" /><path d="M1.500 3.500h6v6h-6z" stroke="#eee" strokeWidth="2" /></S>
        <S w={10} h={10} c="ml-[9px]"><path d="m1.500 1 7 8M8.500 1l-7 8" stroke="#f0f0f0" strokeWidth="2.400" /></S>
      </div>
      <ViewCube />
      <div className="absolute top-[128px] left-[1271px] flex h-[17px] w-[46px] items-center rounded-[4px] border border-[#a6a9b6] bg-[#9093a1] pl-[4px] text-[11px] text-[#5d606c]">
        SCU<S w={10} h={6} c="ml-[4px]"><path d="M1 .5h8l-4 4z" fill="#a7aab8" stroke="#c5c8d2" /></S>
      </div>
      <NavBar />
    </div>
  );
}

/* ---------- command line and layout tabs ---------- */
function CommandLine() {
  return (
    <div className="mt-[2px] flex h-[53px] shrink-0 border-y border-[#7a7a7a]">
      <div className="flex w-[23px] flex-col items-center bg-gradient-to-r from-[#6e6e6e] to-[#4a4a4a]">
        <S w={18} h={6} c="mt-[4px]"><path d="M1 1h17M1 4.500h17" stroke="#b0b0b0" strokeWidth="2" strokeDasharray="2 1" /></S>
        <S w={10} h={10} c="mt-[6px]"><path d="m1 1 8 8M9 1 1 9" stroke="#fff" strokeWidth="2" /></S>
        <S w={15} h={15} c="mt-[9px]"><path d="m5.500 5.500 7.500 7.500" stroke="#eee" strokeWidth="3.200" /><path d="M1.500 4.500c0 5 7 4 5.500-1L5 1.500" stroke="#eee" strokeWidth="2" /></S>
      </div>
      <div className="flex flex-1 flex-col font-['DejaVu_Sans_Mono',monospace] text-[11.650px]">
        <div className="flex h-[29px] items-end border-b border-[#777] bg-[#c6c6c6] pb-[1px] pl-[2px] leading-[15px] text-black">Comando: *Cancelar*</div>
        <div className="flex h-[22px] items-center bg-white pl-[5px] text-[#8a8a8a] italic">
          <S w={15} h={14}><rect x=".5" y=".5" width="14" height="13" rx="1" fill="#dce2ec" stroke="#8e97a8" /><path d="m3 4 3.500 3L3 10M7.500 10.500h4" stroke="#444" strokeWidth="1.200" /></S>
          <S w={6} h={4} c="mr-[7px] ml-[3px]"><path d="M0 0h6L3 3.500z" fill="#777" /></S>
          <span className="pt-[2px]">Escriba un comando</span>
        </div>
      </div>
    </div>
  );
}

function LayoutTab({ w, cw, label, on }: { w: string; cw: number; label: string; on?: boolean }) {
  return (
    <div className={"relative flex h-[18px] shrink-0 items-center justify-center " + w + (on ? " z-10" : "")}>
      <S w={cw + 12} h={18} c="absolute top-0 left-[-6px]">
        <path d={`M0 0C7 1 6 17.500 14 17.500H${cw - 6}C${cw + 3} 17.500 ${cw + 4} 1 ${cw + 12} 0z`} fill={on ? "url(#layOn)" : "url(#lay)"} stroke="#777" strokeWidth=".6" />
      </S>
      <span className={"relative pl-[1px] text-[12px] leading-[16px] whitespace-nowrap " + (on ? "font-bold tracking-[-0.300px] text-white" : "tracking-[-0.300px] text-[#b0b0b0]")}>{label}</span>
    </div>
  );
}

/* ---------- status bar ---------- */
const cell = "flex h-[27px] shrink-0 items-center border border-[#7a7a7a] bg-[#505050] mr-[1px] ";
const on = "#2f93f5";
const glow = "drop-shadow-[0_0_2px_#1877e6]";
const Anno = ({ c, children }: { c: string; children?: React.ReactNode }) => (
  <><path d="M8 1 6.500 8 1 15l7-4 7 4-5.500-7z" fill={c} />{children}</>
);
function StatusBar() {
  return (
    <div className="ml-auto flex h-[28px] shrink-0 text-[12px] text-white">
      <div className={cell + "w-[182px] justify-end pr-[4px] tracking-[-0.020px] whitespace-nowrap"}>2453.1952, 403.9006, 0.0000</div>
      <div className={cell + "w-[58px] justify-center tracking-[-0.100px]"}>MODELO</div>
      <div className={cell + "w-[65px] gap-[8px] pl-[5px]"}>
        <S w={15} h={15} c={glow}><path d="M2.500 0v15M6 0v15M9.500 0v15M13 0v15M0 2.500h15M0 6h15M0 9.500h15M0 13h15" stroke={on} /></S>
        <S w={14} h={14}><path d="M0 .5h14M0 3.500h14M0 6.500h14M0 9.500h14M0 12.500h14" stroke="#bbb" strokeDasharray="1 2" /></S>
        <Dn w={7} />
      </div>
      <div className={cell + "w-[103px] pl-[6px]"}>
        <S w={14} h={14}><path d="M1.500 0v12.500H14M1.500 8.500h4v4" stroke="#ccc" strokeWidth="1.200" /></S>
        <S w={16} h={16} c={"ml-[9px] " + glow}><circle cx="7.500" cy="8" r="6" stroke={on} strokeWidth="1.600" /><path d="M7.500 8H16M7.500 8l4-5" stroke={on} strokeWidth="1.500" /></S>
        <Dn w={7} c="ml-[7px]" />
        <S w={18} h={18} c="ml-[8px]"><path d="m1 1 16 16M9 0v18M3.500 10.500h4" stroke="#bbb" strokeWidth="1.100" opacity=".85" /></S>
        <Dn w={7} c="ml-[6px]" />
      </div>
      <div className={cell + "w-[63px] pl-[3px]"}>
        <S w={16} h={14}><path d="M16 12.500H1L12 2" stroke="#ccc" strokeWidth="1.200" /><path d="M5 7h4v3H5z" fill="#ccc" /></S>
        <S w={18} h={18} c="ml-[8px]"><path d="M4 4.500h10.500v10.500H3z" stroke={on} strokeWidth="1.500" /><path d="M1 1h5v5H1z" fill="#0fd017" stroke="#063" /></S>
        <Dn w={7} c="ml-[7px]" />
      </div>
      <div className={cell + "w-[25px] justify-center"}><S w={16} h={14}><path d="M0 1.500h16M0 5h10M0 8.500h16M0 12h13" stroke="#ddd" strokeWidth="2" /></S></div>
      <div className={cell + "w-[107px] pl-[3px]"}>
        <S w={18} h={16} c={glow}><Anno c={on}><circle cx="11.500" cy="4" r="3" fill="#505050" stroke={on} strokeWidth="1.500" /></Anno></S>
        <S w={17} h={16} c="ml-[7px]"><Anno c="#b9b9b9"><path d="m12 0-3 4h4l-3 4" stroke="#eee" /></Anno></S>
        <S w={16} h={16} c="ml-[6px]"><Anno c="#c9c9c9" /></S>
        <span className="ml-[9px] tracking-[-0.300px]">1:1</span>
        <Dn w={7} c="ml-[4px]" />
      </div>
      <div className={cell + "w-[45px] pl-[5px]"}>
        <S w={14} h={14}><circle cx="7" cy="7" r="4" stroke="#d8d8d8" strokeWidth="3" /><circle cx="7" cy="7" r="6.200" stroke="#d8d8d8" strokeWidth="1.600" strokeDasharray="2.400 2.470" /></S>
        <Dn w={7} c="ml-[9px]" />
      </div>
      <div className={cell + "w-[21px] justify-center"}><S w={14} h={14}><path d="M7 0v14M0 7h14" stroke="#ccc" strokeWidth="1.600" /></S></div>
      <div className={cell + "w-[25px] justify-center"}><S w={15} h={16}><path d="M1 1h6v6H1zM7.500 9 4 15h7z" stroke="#ccc" /><circle cx="11.500" cy="7" r="3" stroke="#ccc" /></S></div>
      <div className={cell + "w-[26px] justify-center"}><S w={17} h={17} c={glow}><circle cx="8.500" cy="8.500" r="7.500" fill="#1f5fa5" stroke={on} strokeWidth="1.600" /><path d="m8 10.500 4-3" stroke="#bcdcff" strokeWidth="1.300" /></S></div>
      <div className={cell + "w-[25px] justify-center"}><S w={17} h={17}><path d="M1.500 1.500h7l3 3V12h-10z" fill="#5b94dd" stroke="#cfe0f5" /><path d="M1 9h9v5H1z" fill="#f2cd3c" /><path d="M3 4h5" stroke="#fff" strokeWidth="2" /><path d="m8 12 3 3 5-7" stroke="#4fc22f" strokeWidth="2.200" /></S></div>
      <div className="flex h-[27px] w-[50px] shrink-0 items-center gap-[9px] border border-[#7a7a7a] bg-[#505050] pl-[3px]">
        <S w={16} h={13}><path d="M.6.600h14.800v11.800H.6z" stroke="#ddd" strokeWidth="1.200" /><path d="M9 3h4v3.500zM7 10H3V6.500z" fill="#eee" /></S>
        <S w={16} h={13}><path d="M0 1.500h16M0 6.500h16M0 11.500h16" stroke="#c6c6c6" strokeWidth="1.800" /></S>
      </div>
    </div>
  );
}

/* ---------- taskbar ---------- */
function Task({ w = "w-[45px]", run, active, stacked, children }: { w?: string; run?: boolean; active?: boolean; stacked?: boolean; children: React.ReactNode }) {
  return (
    <div className={"flex h-[40px] shrink-0 flex-col items-center " + w + (active ? " bg-[#3b4347]" : "")}>
      <div className="flex h-[38px] items-center pt-[1px]">{children}</div>
      {run && <span className={"flex h-[2px] justify-end bg-[#76b9ed] " + (active ? "w-[44px]" : "w-[36px]")}>{stacked && <i className="h-[2px] w-[8px] bg-[#4f83ac]" />}</span>}
    </div>
  );
}

function Taskbar() {
  return (
    <div className="absolute top-[728px] left-0 flex h-[40px] w-[1366px] bg-[#0a1116] text-white">
      <Task w="w-[48px]"><S><path d="M0 2.300 6.500 1.400v6.100H0zM7.500 1.200 16 0v7.500H7.500zM0 8.500h6.500v6.100L0 13.700zM7.500 8.500H16V16l-8.500-1.200z" fill="#fff" /></S></Task>
      <Task w="w-[48px]"><S><circle cx="10" cy="6" r="5.200" stroke="#fff" strokeWidth="1.300" /><path d="M6.300 9.700.6 15.400" stroke="#fff" strokeWidth="1.300" /></S></Task>
      <Task w="w-[48px]"><S w={20} h={14}><path d="M4.600.600h10.800v12.800H4.600zM3 2.500H.6v9H3M17 2.500h2.400v9H17" stroke="#fff" strokeWidth="1.200" /></S></Task>
      <Task w="w-[49px]"><S w={25} h={20}><path d="M.5 6.500 12.500 0l12 6.500V19.500H.5z" fill="#fff" /><path d="M2 7h21l-9 4 5 5z" fill="#0a1116" /></S></Task>
      <Task w="w-[45px]"><S w={20} h={21} vb="0 0 24 24"><path d="M.5 10.500C1.500 4 6.500 0 12.300 0 19 0 23.500 4.800 23.500 11.300V14H8.200c.2 6.200 8.600 6.700 13.600 3.500v4.700C14 26.300 3 24 3 14.800c0-4.300 2.500-7 5.700-8.600-1 1.200-1.300 2.500-1.400 3.600h8.300c0-7.300-11-5.800-15.100.700z" fill="#0f7fe0" /></S></Task>
      <Task w="w-[46px]" run><S w={22} h={19}><path d="M.5 1.500h7l2 2.500h12V18H.5z" fill="#f8d775" /><path d="M1 5h20v12.500H1z" fill="#fdea9e" /><path d="M4.500 18.500V10.500h13v8h-3.300V14H7.800v4.500z" fill="#35a8e0" /></S></Task>
      <Task w="w-[46px]"><S w={23} h={23}><path d="M7 7V4.500a4.500 4.500 0 0 1 9 0V7" stroke="#eee" strokeWidth="1.300" /><path d="M.5 6.500h22L21 22.500H2z" fill="#fff" /><path d="M6 9h5v5H6z" fill="#f25022" /><path d="M12 9h5v5h-5z" fill="#7fba00" /><path d="M6 15h5v5H6z" fill="#00a4ef" /><path d="M12 15h5v5h-5z" fill="#ffb900" /></S></Task>
      <Task w="w-[46px]"><S w={20} h={20}><rect width="20" height="20" rx="3" fill="#d8221f" /><path d="M2.500 5.500c3-1.500 5.500-1 7.500.5 2-1.500 4.500-2 7.500-.5v9c-3-1-5.500-.5-7.500.8-2-1.300-4.500-1.800-7.500-.8z" fill="#fff" /><path d="M10 6v9" stroke="#c99" /></S></Task>
      <Task w="w-[46px]"><S w={20} h={23}><path d="M1 1h15v3l.5 4L19.500 13c-2 2-4 2-4.500 2v7H1z" fill="#d9462c" /><ellipse cx="8.500" cy="6" rx="3" ry="2" fill="#889" stroke="#222" /><path d="M5 13c4 2 9 1.500 13.500 0" stroke="#222" strokeWidth="1.300" /></S></Task>
      <Task w="w-[46px]" run><S w={23} h={22}><path d="m1.500 8 13.500-6.500L21.500 13 8 20.500z" fill="#25292b" stroke="#e7e7e7" strokeWidth="1.800" /><path d="M8 7h6v8H8z" fill="#6c8b43" /><path d="m8 8 6 6M14 8l-6 6" stroke="#262b22" /></S></Task>
      <Task w="w-[46px]" run><S w={24} h={24}><path d="M0 0h24v24H0z" fill="#0078d7" /><path d="M7.500 8.500h9v7h-9zM10.500 10v3h3" stroke="#128fa0" /></S></Task>
      <Task w="w-[46px]"><S w={22} h={22}><rect width="22" height="22" rx="2" fill="url(#pur)" /><path d="M2 4h7v4h5V4h6M2 8h4M9 12h4v8M16 12v8M19 10v10" stroke="#e3e3f0" strokeWidth="1.300" /><path d="M2 13h6M2 17h6M14 9h5" stroke="#e3a063" strokeWidth="1.300" /></S></Task>
      <Task w="w-[43px]" run><S w={22} h={22} vb="0 0 22 22"><path d="M11 11 1.500 5.500A11 11 0 0 1 20.500 5.500z" fill="#e2392f" /><path d="M11 11 1.500 5.500A11 11 0 0 0 11 22z" fill="#37a456" /><path d="M11 11V22A11 11 0 0 0 20.500 5.500H11z" fill="#fbcf3b" /><path d="m1.500 5.500 5 8 4.500-7h9.500" fill="#e2392f" /><path d="m6.500 13.500 9-.5L11 22z" fill="#37a456" /><circle cx="11" cy="11" r="5" fill="#fff" /><circle cx="11" cy="11" r="4" fill="#4a8af4" /></S></Task>
      <Task><S w={24} h={23}><path d="M0 0h24v23H0z" fill="#000" /><ellipse cx="12" cy="11.500" rx="11.500" ry="11" fill="#ffee00" /><path d="M5 8c3-4 8-4.500 13-3-2 .3-3 1-4 2l6 1c-1 2-4 3-7 5-4 2.500-8 1-9-2 3 1 6 .500 8-2-3-1-5-1-7-1z" fill="#111" /></S></Task>
      <Task><S w={24} h={23}><path d="M0 0h24v20H0z" fill="url(#org)" /><path d="M3 20C6 8 14 3 24 6M10 20c0-8 6-14 14-20" stroke="#a82a12" /><path d="M0 20h24v3H0z" fill="#c9c6c4" /></S></Task>
      <Task run stacked>
        <S w={23} h={22} c="font-['Open_Sans',sans-serif]"><path d="M12 3.500h10.500v15H12z" fill="#fff" stroke="#2b579a" /><path d="M14 6.500h7M14 9h7M14 11.500h7M14 14h7M14 16.500h7" stroke="#2b579a" /><path d="M0 2.500 14 0v22L0 19.500z" fill="#2b579a" /><text x="7" y="15" fontSize="10" fontWeight="700" fill="#fff" textAnchor="middle">W</text></S>
      </Task>
      <Task run>
        <S w={24} h={24} c="font-['Open_Sans',sans-serif]"><circle cx="7" cy="7" r="6.500" fill="#00aff0" /><circle cx="11" cy="11.500" r="9.800" fill="#00aff0" /><circle cx="16" cy="16" r="6" fill="#00aff0" /><text x="11" y="17.500" fontSize="17" fontWeight="700" fill="#fff" textAnchor="middle">S</text><circle cx="17.500" cy="17.500" r="5.300" fill="#fff" stroke="#7cc31c" strokeWidth="1.500" /></S>
      </Task>
      <Task><S w={20} h={21}><path d="M1 .5 19.500 10.500 1 20.500z" fill="#4b4650" /><path d="M1 .5 13 10.500 1 20.500z" fill="#8a5bd6" /></S></Task>
      <Task w="w-[44px]" run active><S w={24} h={24}><path d="M0 0h24v24H0z" fill="url(#acd)" /><path d="M12 4 5 19h3.500l3.500-2 3.500 2H19z" fill="#a8191d" /><path d="m12 4 1 12-4.500 3" fill="#7c0d12" /></S></Task>
      <Task w="w-[48px]" run>
        <S w={26} h={24}><ellipse cx="12.500" cy="11" rx="10" ry="7.500" stroke="#e0d81c" strokeDasharray="3 1.500" /><path d="m6 7 3-4 2 3 2-5 4 1 1 5-5 3 1 6-6 1-4-4z" fill="#d8150d" /><path d="m10 6 1 8M7 10l8-3" stroke="#800" /><path d="M14.500 9.500h6v6h-6zM17.500 6v12M12 12.500h11" stroke="#2a48d8" strokeWidth="1.300" /><text x="1" y="22.500" fontSize="4.500" fill="#2c2c2c" textLength="24" lengthAdjust="spacingAndGlyphs" fontWeight="700">CADA-SHOP</text></S>
      </Task>
      <Task w="w-[44px]" run><S w={22} h={22}><path d="M.7.700h20.600v20.600H.7z" fill="#111" stroke="#fff" strokeWidth="1.400" /><path d="M1 17 8 7l4 5 2.500-3L21 17v4H1z" fill="#fff" /></S></Task>
      <Task run stacked>
        <S w={24} h={24} c="font-['Open_Sans',sans-serif]"><path d="M1 4 12 0l11 4v13l-11 4-11-4z" fill="#c4161c" /><path d="M1 4 12 0l11 4-11 3z" fill="#e4555a" /><text x="12" y="13.500" fontSize="9.500" fontWeight="700" fill="#fff" textAnchor="middle">SW</text><text x="15" y="23" fontSize="7" fontWeight="700" fill="#fff" textAnchor="middle">2016</text></S>
      </Task>
      <Task run stacked><S w={23} h={23}><path d="M0 0h23v23H0z" fill="#333839" /><path d="M1 5c4 4 6 4 8 4 5 1 9 0 13-4-1 6-3 9-8 11l-3 5c-5-1-5-3-4-5-3-1-6-5-6-11z" fill="#eee" /><path d="m9 12 5 1.500" stroke="#333" strokeWidth="1.400" /></S></Task>
      <div className="ml-auto flex items-center pr-[3px] text-[12px] leading-[18px]">
        <S w={15} h={16} c="mr-[23px]"><circle cx="11" cy="4" r="3" stroke="#ddd" strokeWidth="1.200" /><circle cx="5" cy="7.500" r="2.800" stroke="#ddd" strokeWidth="1.200" /><path d="M.7 15c.3-6.500 8-6.500 8.500-1M8 9c3-3 6-1 6.300 2" stroke="#ddd" strokeWidth="1.200" /></S>
        <S w={12} h={7} c="mr-[10px]"><path d="m.7 6.300 5.300-5.300 5.300 5.300" stroke="#fff" strokeWidth="1.300" /></S>
        <S w={16} h={12} c="mr-[8px]"><path d="M5.500 2.500h9v8h-7" stroke="#fff" strokeWidth="1.200" /><path d="M8 5h5v3.500H8zM15 5h1v3h-1z" fill="#fff" /><path d="M1.500 0v3h4V0M3.500 3v3c0 3 0 4 3 4" stroke="#fff" strokeWidth="1.200" /></S>
        <S w={16} h={15} c="mr-[8px]"><path d="M3.500 14.500a11 11 0 0 1 11-11M6.500 14.500a8 8 0 0 1 8-8M9.500 14.500a5 5 0 0 1 5-5" stroke="#858b8f" strokeWidth="1.200" /><circle cx="13.500" cy="13.500" r="1.500" fill="#858b8f" /><path d="M2.500 0v5M0 2.500h5M1 1l3 3M4 1 1 4" stroke="#fff" strokeWidth=".8" /></S>
        <S w={17} h={14} c="mr-[11px]"><path d="M.7 4.700H3l3.500-3.500v11.600L3 9.300H.7z" stroke="#fff" strokeWidth="1.200" /><path d="M9 4.500c1.300 1.500 1.300 3.500 0 5M11.500 2.500c2.500 2.800 2.500 6.200 0 9M14 .8c3.300 3.600 3.300 8.800 0 12.400" stroke="#ccc" strokeWidth="1.200" /></S>
        <div className="w-[22px] pb-[1px] text-[11.500px] tracking-[-0.500px]"><div>ESP</div><div>LAA</div></div>
        <div className="ml-[2px] w-[70px] pb-[1px] text-center text-[12px] tracking-[-0.450px] whitespace-nowrap"><div>4:56 p. m.</div><div>21/03/2018</div></div>
        <S w={26} h={26} c="mt-[6px] ml-[18px] font-['Open_Sans',sans-serif]"><path d="M1 1h15v11H8l-3 3v-3H1z" fill="#fff" /><path d="M3.500 3.500h10M3.500 6.500h10M3.500 9.500h6" stroke="#0a1116" /><circle cx="17" cy="16" r="7.500" fill="#2b3135" stroke="#9aa0a4" /><text x="17" y="20" fontSize="11" fill="#fff" textAnchor="middle">3</text></S>
        <span className="ml-[9px] h-[40px] w-px bg-[#4c5256]" />
      </div>
    </div>
  );
}

export default function App() {
  return (
    <div className="relative h-[768px] w-[1366px] overflow-hidden bg-[#e3e3e3] font-['Open_Sans','Noto_Sans',sans-serif]">
      <Defs />
      {/* document window behind */}
      <div className="flex h-[728px] flex-col">
        <div className="h-[72px] bg-[#2b579a]" />
        <div className="h-[21px] bg-[#dadada]" />
        <div className="flex flex-1 justify-between bg-[#dcdcdc]">
          <div className="ml-[5px] w-[300px] bg-[#f4f4f4]" />
        </div>
        <div className="flex h-[21px] items-start overflow-hidden border-t border-[#c4c4c4] bg-[#f1f1f1] pt-[2px] pl-[12px] text-[12px] leading-[14px] text-[#333]">
          <span className="w-[96px]">Página 2</span><span className="w-[96px]">palabras</span><span>Español (Perú)</span>
          <span className="mr-[210px] ml-auto h-[20px] w-[38px] bg-[#bcbcbc]" />
        </div>
      </div>

      {/* application window */}
      <div className="absolute top-[3px] left-[10px] flex h-[717px] w-[1347px] flex-col bg-[#383838] pr-[1px] shadow-[0_1px_7px_1px_rgba(0,0,0,0.5)]">
        <div className="flex shrink-0 bg-[#535353]">
          <div className="w-[41px] shrink-0">
            <div className="h-[7px] bg-white" />
            <div className="flex h-[41px] items-center border border-[#111] bg-gradient-to-b from-[#d8d8d8] to-[#6a6a6a] pl-[3px]">
              <S w={24} h={26}><path d="M12 0 17.500 13 24 24.500c-3 .5-4.500-.500-6.500-2L12 21l-5.500 1.500c-2 1.500-3.500 2.500-6.500 2L7 12z" fill="url(#red)" /><path d="m12 0 1.500 15L6.500 22.500C9 17 9 10 12 0z" fill="#8e1218" opacity=".55" /><path d="m13.500 15 4 7.500L24 24.500z" fill="#c92a2b" /></S>
              <S w={8} h={4} c="ml-[2px]"><path d="M0 0h8L4 4z" fill="#3a3f4a" /></S>
            </div>
          </div>
          <div className="flex-1"><TitleBar /><RibbonTabs /></div>
        </div>
        <Ribbon />
        <div className="flex h-[29px] shrink-0 flex-col border-t border-[#8a8a8a] bg-[#383838] pt-[3px]">
          <div className="flex pl-[21px]">
            <FileTab w="w-[123px]" cw={123} label="Inicio" />
            <FileTab w="w-[190px]" cw={190} label="tomacorriendo prueba N° 1*" close />
            <FileTab w="w-[162px]" cw={162} label="tomacorriente de 360°*" on close />
            <FileTab w="w-[123px]" cw={123} label="Dibujo2*" close />
            <S w={24} h={19} c="mt-[2px] ml-[7px]"><path d="M1 .5h15c5 0 6 6 6.500 14.500H11C4 15 3 8 1 .5z" fill="#4a4a4a" stroke="#777" /><path d="M12 4v8M8 8h8" stroke="#d0d0d0" strokeWidth="2" /></S>
          </div>
          <div className="h-[3px] bg-[#5c5c5c]" />
        </div>
        <Canvas />
        <CommandLine />
        <div className="flex h-[20px] shrink-0 pl-[10px]">
          <LayoutTab w="w-[68px]" cw={68} label="Modelo" on />
          <LayoutTab w="w-[96px]" cw={96} label="Presentación1" />
          <LayoutTab w="w-[98px]" cw={98} label="Presentación2" />
          <S w={26} h={18} c="ml-[2px]"><path d="M4 .5h19C20 6 20 16.500 13 16.500H2C4 10 0 5 4 .5z" fill="#4a4a4a" stroke="#777" strokeWidth=".6" /><path d="M12 5v8M8 9h8" stroke="#ccc" strokeWidth="2" /></S>
        </div>
        <StatusBar />
      </div>
      <Taskbar />
    </div>
  );
}
